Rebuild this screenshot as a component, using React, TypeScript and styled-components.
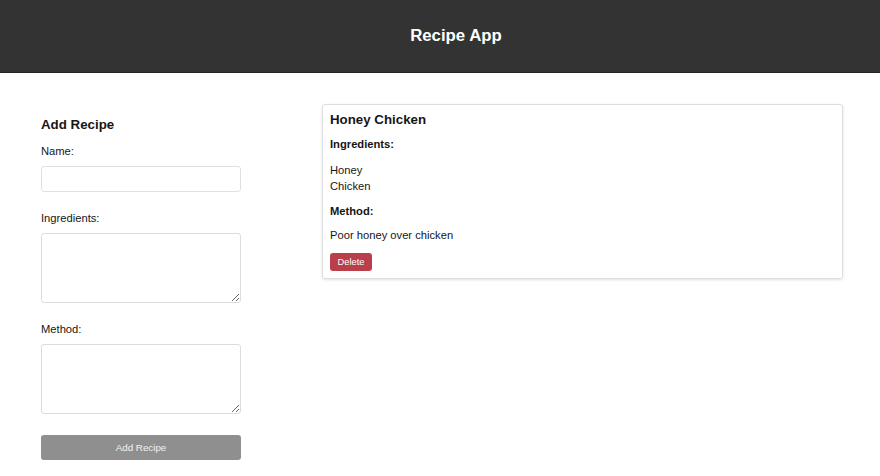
import React from "react";
import styled, { createGlobalStyle } from "styled-components";

const GlobalStyle = createGlobalStyle`
  html, body { margin: 0; padding: 0; background: #ffffff; }
  body { font-family: "Liberation Sans", Arial, sans-serif; color: #161616; }
  * { box-sizing: border-box; }
`;

const Header = styled.header`
  height: 73px;
  background: #333333;
  border-bottom: 1px solid #232323;
  display: flex;
  align-items: center;
  justify-content: center;
  padding-left: 32px;
`;

const Title = styled.h1`
  margin: 0;
  font-size: 16.8px;
  font-weight: 700;
  color: #ffffff;
  line-height: 19px;
  margin-top: -2px;
`;

const Main = styled.main`
  display: flex;
  align-items: flex-start;
  gap: 81px;
  padding: 31px 37px 0 41px;
`;

const Form = styled.form`
  width: 200px;
  flex: 0 0 200px;
  display: flex;
  flex-direction: column;
  padding-top: 13px;
`;

const FormHeading = styled.h3`
  margin: 0 0 13px;
  font-size: 13.3px;
  line-height: 15px;
  font-weight: 700;
`;

const Field = styled.div`
  display: flex;
  flex-direction: column;
  & + & { margin-top: 20px; }
`;

const Label = styled.label`
  font-size: 11.2px;
  line-height: 13px;
  margin-bottom: 8px;
`;

const TextInput = styled.input`
  width: 200px;
  height: 26px;
  border: 1px solid #e0e0e0;
  border-radius: 3px;
  font-family: inherit;
  font-size: 11px;
  padding: 0 6px;
  outline: none;
`;

const TextArea = styled.textarea`
  width: 200px;
  height: 70px;
  border: 1px solid #dcdcdc;
  border-radius: 3px;
  font-family: inherit;
  font-size: 11px;
  padding: 4px 6px;
  outline: none;
  display: block;
`;

const SubmitButton = styled.button`
  margin-top: 21px;
  width: 200px;
  height: 25px;
  border: none;
  border-radius: 3px;
  background: #8f8f8f;
  color: #f2f2f2;
  font-family: inherit;
  font-size: 9.8px;
`;

const Card = styled.article`
  flex: 1;
  border: 1px solid #dedede;
  border-radius: 3px;
  box-shadow: 0 1px 3px rgba(0, 0, 0, 0.12);
  padding: 7px 7px 7px 7px;
  display: flex;
  flex-direction: column;
  align-items: flex-start;
  gap: 11px;
`;

const CardTitle = styled.h3`
  margin: 0;
  font-size: 13.3px;
  line-height: 15px;
  font-weight: 700;
`;

const SectionTitle = styled.h4`
  margin: 0;
  font-size: 11.2px;
  line-height: 13px;
  font-weight: 700;
`;

const IngredientList = styled.div`
  display: flex;
  flex-direction: column;
`;

const Ingredient = styled.span`
  font-size: 11.2px;
  line-height: 16px;
`;

const Method = styled.p`
  margin: 0;
  font-size: 11.2px;
  line-height: 13px;
`;

const DeleteButton = styled.button`
  height: 18px;
  width: 42px;
  border: none;
  border-radius: 3px;
  background: #b9404a;
  color: #ffffff;
  font-family: inherit;
  font-size: 9.3px;
  padding: 0;
`;

export default function App() {
  return (
    <>
      <GlobalStyle />
      <Header>
        <Title>Recipe App</Title>
      </Header>
      <Main>
        <Form onSubmit={(e) => e.preventDefault()}>
          <FormHeading>Add Recipe</FormHeading>
          <Field>
            <Label>Name:</Label>
            <TextInput type="text" />
          </Field>
          <Field>
            <Label>Ingredients:</Label>
            <TextArea />
          </Field>
          <Field>
            <Label>Method:</Label>
            <TextArea />
          </Field>
          <SubmitButton type="submit">Add Recipe</SubmitButton>
        </Form>
        <Card>
          <CardTitle>Honey Chicken</CardTitle>
          <SectionTitle>Ingredients:</SectionTitle>
          <IngredientList>
            <Ingredient>Honey</Ingredient>
            <Ingredient>Chicken</Ingredient>
          </IngredientList>
          <SectionTitle>Method:</SectionTitle>
          <Method>Poor honey over chicken</Method>
          <DeleteButton type="button">Delete</DeleteButton>
        </Card>
      </Main>
    </>
  );
}
